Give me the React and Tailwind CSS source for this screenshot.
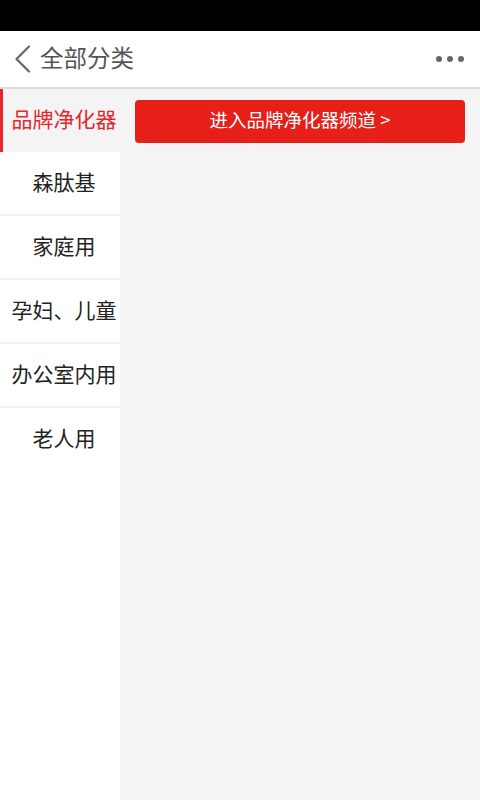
import React from "react";

const items = ["森肽基", "家庭用", "孕妇、儿童", "办公室内用", "老人用"];

export default function App() {
  return (
    <div
      className="w-[480px] h-[800px] flex flex-col bg-white overflow-hidden"
      style={{ fontFamily: '"Noto Sans CJK SC", "Noto Sans", sans-serif' }}
    >
      <div className="h-[31px] bg-black shrink-0" />
      <div className="h-[58px] shrink-0 flex items-center bg-white border-b-2 border-[#dcdcdc]">
        <svg width="18" height="28" viewBox="0 0 18 28" className="ml-[13px]">
          <path d="M16 1.5 L3.5 14 L16 26.5" fill="none" stroke="#666" strokeWidth="2.2" strokeLinecap="round" strokeLinejoin="round" />
        </svg>
        <span className="ml-[9px] pb-[3px] text-[23.5px] text-[#555] leading-none">全部分类</span>
        <div className="ml-auto mr-[16px] flex gap-[5px]">
          <span className="w-[6px] h-[6px] rounded-full bg-[#666]" />
          <span className="w-[6px] h-[6px] rounded-full bg-[#666]" />
          <span className="w-[6px] h-[6px] rounded-full bg-[#666]" />
        </div>
      </div>
      <div className="flex flex-1 min-h-0">
        <div className="w-[120px] shrink-0 flex flex-col bg-white">
          <div className="h-[63px] bg-[#f4f4f4] border-l-[3px] border-[#e5262b] flex items-center justify-center text-[21px] text-[#e5262b] pl-[5px] pb-[4px]">
            品牌净化器
          </div>
          {items.map((t, i) => (
            <div
              key={t}
              className={
                i < items.length - 1
                  ? "h-[64px] border-b-2 border-[#f2f2f2] flex items-center justify-center text-[21px] text-[#222] pl-[8px] pb-[3px]"
                  : "h-[64px] flex items-center justify-center text-[21px] text-[#222] pl-[8px] pb-[5px]"
              }
            >
              {t}
            </div>
          ))}
        </div>
        <div className="flex-1 bg-[#f4f4f4] pt-[11px] pl-[15px] pr-[15px]">
          <div className="h-[43px] rounded-[4px] bg-[#e61f19] flex items-center justify-center text-white text-[18.5px] pb-[3px]">
            进入品牌净化器频道 &gt;
          </div>
        </div>
      </div>
    </div>
  );
}
